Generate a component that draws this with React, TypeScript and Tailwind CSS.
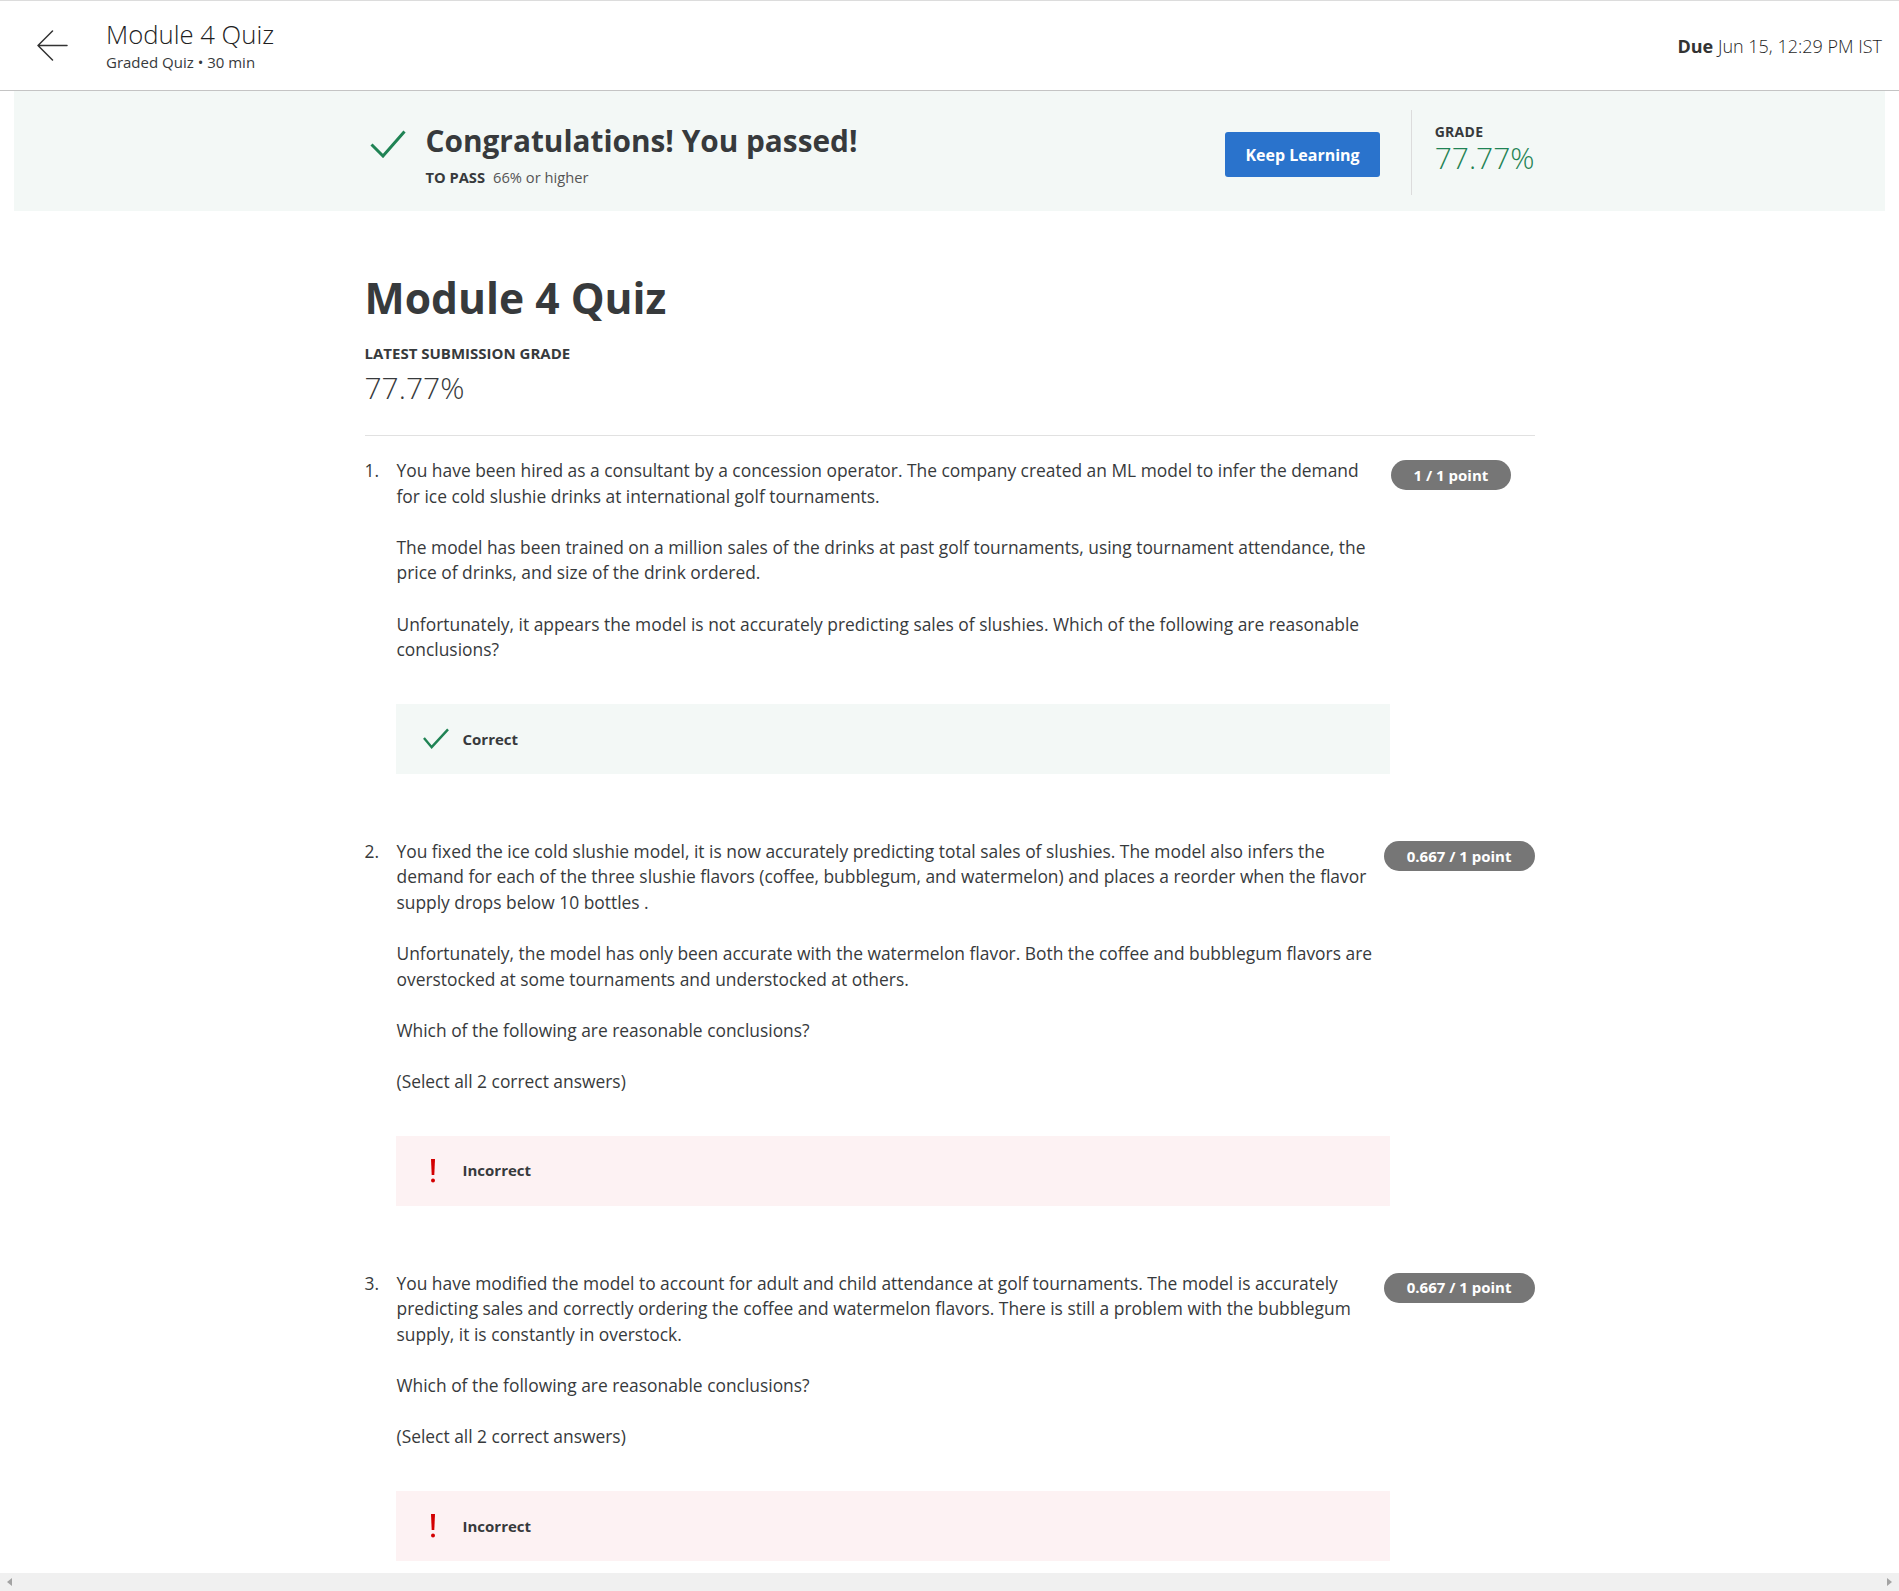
import React from "react";

type Question = {
  num: number;
  paragraphs: string[][];
  points: string;
  correct: boolean;
};

const QUESTIONS: Question[] = [
  {
    num: 1,
    paragraphs: [
      [
        "You have been hired as a consultant by a concession operator. The company created an ML model to infer the demand",
        "for ice cold slushie drinks at international golf tournaments.",
      ],
      [
        "The model has been trained on a million sales of the drinks at past golf tournaments, using tournament attendance, the",
        "price of drinks, and size of the drink ordered.",
      ],
      [
        "Unfortunately, it appears the model is not accurately predicting sales of slushies. Which of the following are reasonable",
        "conclusions?",
      ],
    ],
    points: "1 / 1 point",
    correct: true,
  },
  {
    num: 2,
    paragraphs: [
      [
        "You fixed the ice cold slushie model, it is now accurately predicting total sales of slushies. The model also infers the",
        "demand for each of the three slushie flavors (coffee, bubblegum, and watermelon) and places a reorder when the flavor",
        "supply drops below 10 bottles .",
      ],
      [
        "Unfortunately, the model has only been accurate with the watermelon flavor. Both the coffee and bubblegum flavors are",
        "overstocked at some tournaments and understocked at others.",
      ],
      ["Which of the following are reasonable conclusions?"],
      ["(Select all 2 correct answers)"],
    ],
    points: "0.667 / 1 point",
    correct: false,
  },
  {
    num: 3,
    paragraphs: [
      [
        "You have modified the model to account for adult and child attendance at golf tournaments. The model is accurately",
        "predicting sales and correctly ordering the coffee and watermelon flavors. There is still a problem with the bubblegum",
        "supply, it is constantly in overstock.",
      ],
      ["Which of the following are reasonable conclusions?"],
      ["(Select all 2 correct answers)"],
    ],
    points: "0.667 / 1 point",
    correct: false,
  },
];

function BackArrow() {
  return (
    <svg width="31" height="31" viewBox="0 0 31 31" fill="none" stroke="#333" strokeWidth="1.5" strokeLinecap="round" strokeLinejoin="round">
      <path d="M30 15.5H1M15.5 1L1 15.5L15.5 30" />
    </svg>
  );
}

function BigCheck() {
  return (
    <svg width="36" height="28" viewBox="0 0 36 28" fill="none" stroke="#1f8354" strokeWidth="3" strokeLinejoin="miter">
      <path d="M1.5 14.5L13 26L34.5 1.5" />
    </svg>
  );
}

function SmallCheck() {
  return (
    <svg width="27" height="21" viewBox="0 0 27 21" fill="none" stroke="#1f8354" strokeWidth="2.5">
      <path d="M1 10L9 19.5L26 1" />
    </svg>
  );
}

function Bang() {
  return (
    <svg width="26" height="24" viewBox="0 0 26 24" fill="#d30001">
      <path d="M8 0H12L11.3 16H8.7Z" />
      <circle cx="10" cy="21.5" r="2" />
    </svg>
  );
}

function Header() {
  return (
    <header className="flex h-[91px] items-center border-t border-b border-t-[#dcdcdc] border-b-[#c4c4c4] pl-[37px] pr-[17px]">
      <BackArrow />
      <div className="ml-[38px] flex flex-col">
        <span className="text-[25.7px] font-light leading-[32px] text-[#1f1f1f]">Module 4 Quiz</span>
        <span className="mt-[1px] text-[15px] leading-[20px] text-[#373a3c]">Graded Quiz • 30 min</span>
      </div>
      <div className="ml-auto text-[18px] leading-[24px] text-[#1f1f1f]">
        <span className="font-bold text-[#333]">Due</span>
        <span className="font-light"> Jun 15, 12:29 PM IST</span>
      </div>
    </header>
  );
}

function Banner() {
  return (
    <section className="mx-[14px] h-[120px] bg-[#f3f8f6]">
      <div className="mx-auto flex w-[1170px] items-start">
        <div className="ml-[5px] mt-[39px]">
          <BigCheck />
        </div>
        <div className="ml-[20px] mt-[32px] flex flex-col">
          <h2 className="text-[29.8px] font-bold leading-[36px] text-[#373a3c]">Congratulations! You passed!</h2>
          <div className="mt-[8px] text-[14.7px] leading-[20px] text-[#373a3c]">
            <span className="font-bold">TO PASS</span>
            <span className="ml-2 text-[#555]">66% or higher</span>
          </div>
        </div>
        <button className="ml-auto mt-[41px] h-[45px] rounded-[3px] bg-[#2a73cc] px-[20px] text-[16px] font-bold text-white">
          Keep Learning
        </button>
        <div className="ml-[31px] mt-[19px] h-[85px] w-px bg-[#dcdcdc]" />
        <div className="ml-[23px] mt-[32px] flex flex-col">
          <span className="text-[14px] font-bold leading-[18px] tracking-[0.3px] text-[#373a3c]">GRADE</span>
          <span className="text-[30px] font-light leading-[34px] text-[#1f8354]">77.77%</span>
        </div>
      </div>
    </section>
  );
}

function QuestionBlock({ q }: { q: Question }) {
  return (
    <div className={q.num === 1 ? "mt-[22px]" : "mt-[65px]"}>
      <div className="flex items-start">
        <span className="w-[32px] shrink-0 text-[17.4px] leading-[25.6px] text-[#373a3c]">{q.num}.</span>
        <div className="min-w-0 flex-1 text-[17.4px] leading-[25.6px] text-[#373a3c]">
          {q.paragraphs.map((p, i) => (
            <p key={i} className={i === 0 ? "" : "mt-[25.6px]"}>
              {p.map((line, j) => (
                <span key={j} className="block whitespace-nowrap">
                  {line}
                </span>
              ))}
            </p>
          ))}
        </div>
        <div className="mt-[2px] flex min-w-[148px] shrink-0 pl-[4px]">
          <span className="flex h-[30px] items-center rounded-full bg-[#767676] px-[23px] text-[15px] font-bold text-white">
            {q.points}
          </span>
        </div>
      </div>
      <div
        className={`ml-[31px] mt-[41px] flex h-[70px] w-[994px] items-center pl-[27px] ${
          q.correct ? "bg-[#f3f8f6]" : "bg-[#fdf2f3]"
        }`}
      >
        <div className="flex w-[26px] justify-start">{q.correct ? <SmallCheck /> : <Bang />}</div>
        <span className="ml-[14px] text-[15px] font-bold text-[#373a3c]">
          {q.correct ? "Correct" : "Incorrect"}
        </span>
      </div>
    </div>
  );
}

function ScrollBar() {
  return (
    <div className="flex h-[18px] shrink-0 items-center justify-between bg-[#f0f0f0] px-[7px]">
      <svg width="5" height="8" viewBox="0 0 5 8" fill="#a3a3a3">
        <path d="M5 0V8L0 4Z" />
      </svg>
      <svg width="5" height="8" viewBox="0 0 5 8" fill="#a3a3a3">
        <path d="M0 0V8L5 4Z" />
      </svg>
    </div>
  );
}

export default function App() {
  return (
    <div className="flex h-[1591px] flex-col overflow-hidden bg-white font-['Open_Sans',sans-serif]">
      <div className="flex-1 overflow-hidden">
        <Header />
        <Banner />
        <main className="mx-auto w-[1170px]">
          <h1 className="mt-[60px] text-[42.6px] font-bold leading-[52px] text-[#373a3c]">Module 4 Quiz</h1>
          <div className="mt-[20px] text-[15px] font-bold leading-[20px] text-[#373a3c]">LATEST SUBMISSION GRADE</div>
          <div className="mt-[7px] text-[30px] font-light leading-[36px] text-[#373a3c]">77.77%</div>
          <div className="mt-[29px] h-px bg-[#e1e1e1]" />
          {QUESTIONS.map((q) => (
            <QuestionBlock key={q.num} q={q} />
          ))}
        </main>
      </div>
      <ScrollBar />
    </div>
  );
}
